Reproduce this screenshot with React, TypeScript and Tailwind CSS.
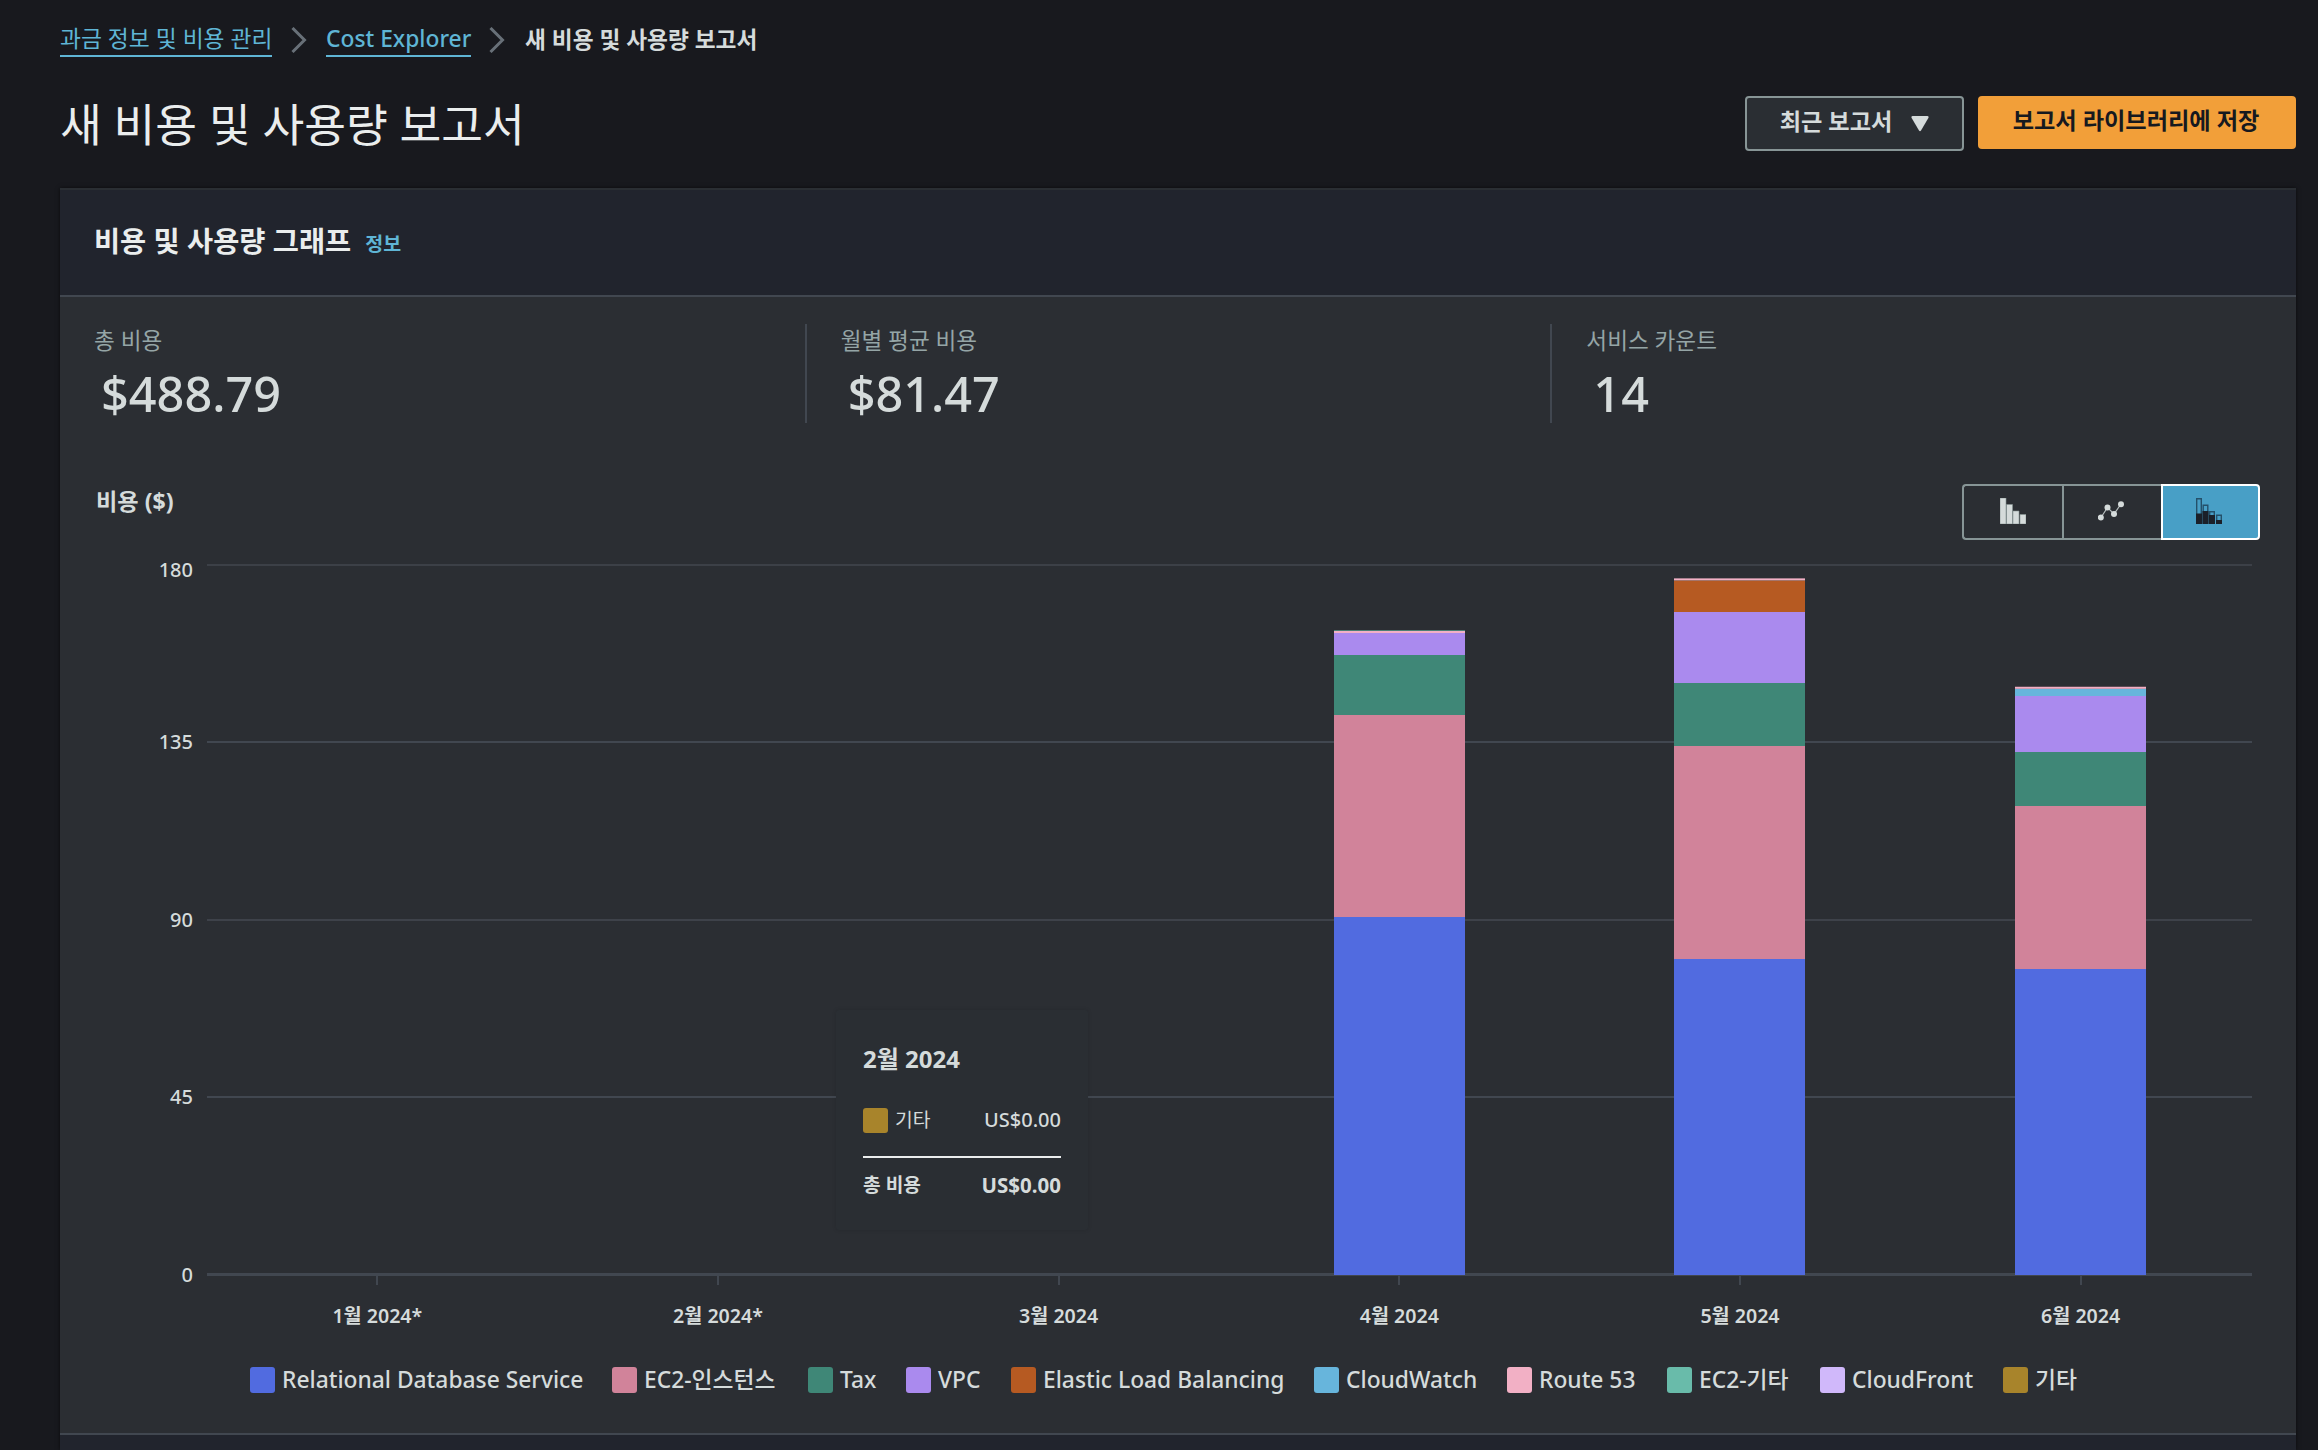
import React from "react";

type Segment = { color: string; height: number };
type Month = { label: string; segments: Segment[] };

const BLUE = "#516be0";
const PINK = "#d1839a";
const GREEN = "#3f8777";
const PURPLE = "#aa8aee";
const ORANGE = "#b65a22";
const CYAN = "#67b5dc";
const ROSE = "#f2b0c5";

const latin = "font-['Noto_Sans','Noto_Sans_CJK_KR',sans-serif]";

// segment heights in px, from the top of the stack down
const months: Month[] = [
  { label: "1월 2024*", segments: [] },
  { label: "2월 2024*", segments: [] },
  { label: "3월 2024", segments: [] },
  {
    label: "4월 2024",
    segments: [
      { color: "#4c7f74", height: 1 },
      { color: ROSE, height: 2 },
      { color: PURPLE, height: 22 },
      { color: GREEN, height: 60 },
      { color: PINK, height: 202 },
      { color: BLUE, height: 358 },
    ],
  },
  {
    label: "5월 2024",
    segments: [
      { color: "#a8808f", height: 1 },
      { color: ROSE, height: 1 },
      { color: "#a5756b", height: 1 },
      { color: ORANGE, height: 31 },
      { color: PURPLE, height: 71 },
      { color: GREEN, height: 63 },
      { color: PINK, height: 213 },
      { color: BLUE, height: 316 },
    ],
  },
  {
    label: "6월 2024",
    segments: [
      { color: "#5d4d56", height: 1 },
      { color: ROSE, height: 1 },
      { color: "#d29db2", height: 1 },
      { color: CYAN, height: 7 },
      { color: PURPLE, height: 56 },
      { color: GREEN, height: 54 },
      { color: PINK, height: 163 },
      { color: BLUE, height: 306 },
    ],
  },
];

const legend = [
  { name: "Relational Database Service", color: BLUE, width: 362 },
  { name: "EC2-인스턴스", color: PINK, width: 196 },
  { name: "Tax", color: GREEN, width: 98 },
  { name: "VPC", color: PURPLE, width: 105 },
  { name: "Elastic Load Balancing", color: ORANGE, width: 303 },
  { name: "CloudWatch", color: CYAN, width: 193 },
  { name: "Route 53", color: ROSE, width: 160 },
  { name: "EC2-기타", color: "#69bbaa", width: 153 },
  { name: "CloudFront", color: "#d0b8fa", width: 183 },
  { name: "기타", color: "#a8842b", width: 75 },
];

const stats = [
  { label: "총 비용", value: "$488.79" },
  { label: "월별 평균 비용", value: "$81.47" },
  { label: "서비스 카운트", value: "14" },
];

const Chevron: React.FC = () => (
  <svg width="16" height="26" viewBox="0 0 16 26" fill="none" stroke="#687078" strokeWidth="3">
    <path d="M1.5 1 13.5 13 1.5 25" />
  </svg>
);

const Breadcrumbs: React.FC = () => (
  <nav className="flex h-[57px] items-end pl-[60px] text-[22.8px] leading-[34px]">
    <a className="w-[212px] whitespace-nowrap border-b-2 border-[#5fb5d5] pt-px leading-[32px] text-[#5fb5d5]">
      과금 정보 및 비용 관리
    </a>
    <span className="ml-[19px] mb-[4px]">
      <Chevron />
    </span>
    <a className="ml-[19px] w-[145px] whitespace-nowrap border-b-2 border-[#5fb5d5] pt-px leading-[32px] font-medium text-[#5fb5d5]">
      Cost Explorer
    </a>
    <span className="ml-[18px] mb-[4px]">
      <Chevron />
    </span>
    <span className="ml-[20px] text-[22.7px] font-bold text-[#d5dbdb]">새 비용 및 사용량 보고서</span>
  </nav>
);

const PageHeader: React.FC = () => (
  <header className="flex h-[131px] items-start justify-between pl-[60px] pr-[22px] pt-[39px]">
    <h1 className="text-[45.4px] leading-[56px] text-[#eaeded]">
      새 비용 및 사용량 보고서
    </h1>
    <div className="flex items-start gap-3.5 text-[23.2px] font-bold leading-[50px]">
      <button className="flex h-[55px] w-[219px] items-center justify-center gap-[19px] rounded-[4px] border-2 border-[#879596] bg-[#2a2e33] pb-[6px] text-[#d5dbdb]">
        최근 보고서
        <svg width="18" height="16" viewBox="0 0 18 16" fill="currentColor" className="mt-[6px]">
          <path d="M1.5 0h15q1.5 0 1 1.8L10 14.6q-1 1.4-2 0L.5 1.8Q0 0 1.500 0Z" />
        </svg>
      </button>
      <button className="flex h-[53px] w-[318px] items-center justify-center rounded-[4px] bg-[#f29f39] pb-[5px] pr-[2px] text-[#16191f]">
        보고서 라이브러리에 저장
      </button>
    </div>
  </header>
);

const Stats: React.FC = () => (
  <div className="flex pt-[27px]">
    {stats.map((s, i) => (
      <div
        key={s.label}
        className={
          i === 0
            ? "h-[99px] w-[745px] pl-[34px]"
            : "h-[99px] w-[746px] border-l-2 border-[#414750] pl-[34px]"
        }
      >
        <p className="text-[22.6px] leading-[34px] text-[#95a5a6]">{s.label}</p>
        <p className="mt-[-1px] pl-[7px] text-[48.6px] font-medium leading-[72px] text-[#d5dbdb]">{s.value}</p>
      </div>
    ))}
  </div>
);

const ChartToggle: React.FC = () => (
  <div className="flex h-14 w-[298px]">
    <button className="flex w-[100px] items-center justify-center rounded-l-[4px] border-2 border-r-0 border-[#879596] pb-[2px]">
      <svg width="26" height="26" viewBox="0 0 26 26">
        <path
          fill="#d5dbdb"
          stroke="#879596"
          strokeWidth="0.6"
          d="M0 0h6v26H0ZM6.500 6.500h6V26h-6ZM13 13h6v13h-6ZM20 16.500h6V26h-6Z"
        />
      </svg>
    </button>
    <button className="flex w-[99px] items-center justify-center border-2 border-r-0 border-[#879596] pb-[2px] pr-[4px]">
      <svg width="26" height="20" viewBox="0 0 26 20" fill="#d5dbdb">
        <path d="M3 16.500 9.500 6.500 16 13 23 3" fill="none" stroke="#b5bcbd" strokeWidth="1.200" />
        <circle cx="2.800" cy="16.500" r="3" />
        <circle cx="9.500" cy="6.500" r="3" />
        <circle cx="16" cy="13" r="3" />
        <circle cx="23" cy="3.200" r="3" />
      </svg>
    </button>
    <button className="flex w-[99px] items-center justify-center rounded-r-[4px] border-2 border-white bg-[#489fc6] pb-[2px] pr-[3px]">
      <svg width="26" height="26" viewBox="0 0 26 26">
        <path
          fill="none"
          stroke="#24506a"
          strokeWidth="1.400"
          d="M.7.7h4.600V25H.7ZM7.200 7.200h4.600V25H7.200ZM13.700 13.700h4.600V25h-4.600ZM20.700 17.200h4.600V25h-4.600Z"
        />
        <path fill="#1b2029" d="M0 15.500h6V26H0ZM6.500 13h6v13h-6ZM13 17h6v9h-6ZM20 22h6v4h-6Z" />
      </svg>
    </button>
  </div>
);

const Tooltip: React.FC = () => (
  <div className="absolute left-[629px] top-[446px] h-[220px] w-[252px] rounded-[3px] bg-[#2a2e33] px-[27px] pt-[32px] text-[#d5dbdb] shadow-[0_0_4px_rgba(0,0,0,0.12)]">
    <p className="text-[24px] font-bold leading-[34px]">2월 2024</p>
    <div className="mt-[26px] flex h-[36px] items-center text-[19.3px]">
      <span className="size-[25px] rounded-[3px] bg-[#a8842b]" />
      <span className="ml-[7px] grow">기타</span>
      <span className="text-[20px] font-medium">US$0.00</span>
    </div>
    <div className="mt-[18px] h-[2px] bg-[#eaeded]" />
    <div className="mt-[9px] flex h-[36px] items-center justify-between text-[19.2px] font-bold">
      <span>총 비용</span>
      <span className="text-[20.5px]">US$0.00</span>
    </div>
  </div>
);

const Chart: React.FC = () => (
  <div className="flex pt-[24px]">
    {/* Y axis */}
    <div className="flex w-[133px] flex-col text-right text-[20px] font-medium leading-[30px] text-[#d5dbdb]">
      <span className="mt-[-9px] h-[172px]">180</span>
      <span className="h-[178px]">135</span>
      <span className="h-[177px]">90</span>
      <span className="h-[178px]">45</span>
      <span>0</span>
    </div>

    {/* Plot */}
    <div className="relative ml-[14px] w-[2045px]">
      <div className="grid h-[709px] grid-rows-4">
        <div className="border-t-2 border-[#3c4047]" />
        <div className="border-t-2 border-[#414750]" />
        <div className="border-t-2 border-[#3e424a]" />
        <div className="border-t-2 border-[#414750]" />
      </div>
      <div className="h-[3px] bg-[#414750]" />
      <div className="grid w-[2044px] grid-cols-6">
        {months.map((m) => (
          <div key={m.label} className="flex flex-col items-center">
            <span className="h-[9px] w-[2px] bg-[#414750]" />
            <span className="mt-[16px] text-[19.600px] font-semibold leading-[30px] text-[#d5dbdb]">
              {m.label}
            </span>
          </div>
        ))}
      </div>
      <div className="absolute left-0 top-0 grid h-[711px] w-[2044px] grid-cols-6 items-end">
        {months.map((m) => (
          <div key={m.label} className="mx-auto w-[131px]">
            {m.segments.map((seg) => (
              <div key={seg.color} style={{ height: seg.height, backgroundColor: seg.color }} />
            ))}
          </div>
        ))}
      </div>
      <Tooltip />
    </div>
  </div>
);

const App: React.FC = () => {
  return (
    <div
      className={`h-[1450px] w-[2318px] overflow-hidden bg-[#18191e] ${latin}`}
    >
      <Breadcrumbs />
      <PageHeader />

      <main className="ml-[60px] h-[1262px] w-[2236px] bg-[#2b2e33] shadow-[0_0_4px_rgba(0,0,0,0.6)]">
        <div className="flex h-[109px] items-center gap-[14px] border-y-2 border-t-[#2a2e33] border-b-[#414750] bg-[#21242d] pb-[3px] pl-[34px]">
          <h2 className="text-[28.4px] font-bold leading-[40px] text-[#eaeded]">
            비용 및 사용량 그래프
          </h2>
          <a className="mt-[5px] text-[19.500px] font-bold text-[#5fb5d5]">정보</a>
        </div>

        <Stats />

        <div className="flex justify-between pl-[36px] pr-[36px] pt-[61px]">
          <h3 className="text-[23.2px] font-bold leading-[34px] text-[#d5dbdb]">비용 ($)</h3>
          <ChartToggle />
        </div>

        <Chart />

        {/* Legend */}
        <ul className="mt-[32px] flex h-[34px] pl-[190px] text-[22.800px] leading-[34px] font-medium text-[#d5dbdb]">
          {legend.map((l) => (
            <li
              key={l.name}
              className="flex shrink-0 items-center whitespace-nowrap"
              style={{ width: l.width }}
            >
              <span className="mr-[7px] h-[26px] w-[25px] shrink-0 rounded-[3px]" style={{ backgroundColor: l.color }} />
              {l.name}
            </li>
          ))}
        </ul>

        <div className="mt-[36px] h-[20px] border-t-2 border-[#414750] bg-[#21242d]" />
      </main>
    </div>
  );
};

export default App;
